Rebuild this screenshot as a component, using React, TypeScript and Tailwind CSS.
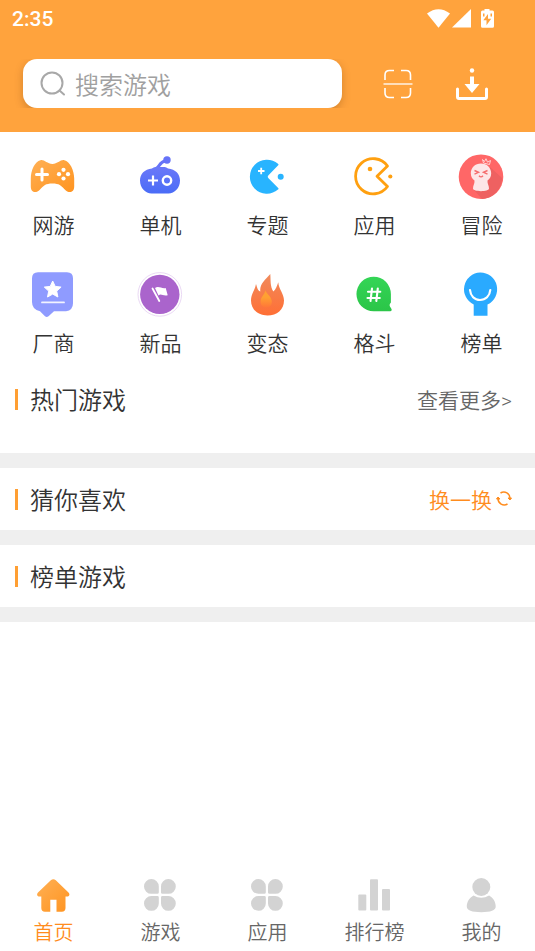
import type { ReactNode } from "react";

interface Item {
  label: string;
  icon: ReactNode;
}

const categories: Item[] = [
  {
    label: "网游",
    icon: (
      <>
        <defs>
          <linearGradient id="pad" x1="0" y1="0" x2="1" y2="1">
            <stop offset="0" stopColor="#ffb055" />
            <stop offset="1" stopColor="#ff9420" />
          </linearGradient>
        </defs>
        <path
          fill="url(#pad)"
          d="M10.5 7.2c3.6-.9 6.6 3.7 11.9 3.7s8.3-4.6 11.9-3.7c5.7 1.2 9.9 10 9.9 18.4v7.9c0 6.4-5.8 6.9-9.2 3.2-4-4.3-5.7-6.3-12.6-6.3s-8.6 2-12.6 6.3c-3.4 3.7-9 3.2-9-3.2v-7.9c0-8.4 4-17.2 9.7-18.4Z"
        />
        <path d="M6.5 21.5h11M12 16v11" stroke="#fff" strokeWidth="3" strokeLinecap="round" />
        <g fill="#fff">
          <circle cx="33.5" cy="16.8" r="2.1" />
          <circle cx="33.5" cy="25.5" r="2.1" />
          <circle cx="29" cy="21.2" r="2.1" />
          <circle cx="38" cy="21.2" r="2.1" />
        </g>
      </>
    ),
  },
  {
    label: "单机",
    icon: (
      <>
        <defs>
          <linearGradient id="bot" x1="0" y1="0" x2="0" y2="1">
            <stop offset="0" stopColor="#6b78f8" />
            <stop offset="1" stopColor="#4a6cf7" />
          </linearGradient>
        </defs>
        <path d="M19 15.5c3.5-1 3-6.5 10-8" stroke="#6673f8" strokeWidth="3" fill="none" />
        <circle cx="30" cy="7" r="3.7" fill="#6673f8" />
        <path
          fill="url(#bot)"
          d="M15 15.5c1.5-1.200 3-1.500 5-1.500h6c2 0 3.500.3 5 1.500 7.500.8 12 5.500 12 12 0 7.500-5.500 13-11.500 13h-17C8.500 40.500 3 35 3 27.500c0-6.500 4.500-11.200 12-12Z"
        />
        <path d="M11 27.5h10M16 22.5v10" stroke="#fff" strokeWidth="2.2" />
        <circle cx="30" cy="27.5" r="4.2" fill="none" stroke="#fff" strokeWidth="2.4" />
      </>
    ),
  },
  {
    label: "专题",
    icon: (
      <>
        <path
          fill="#28b4ff"
          d="M34.2 35c.5.5.4 1-.2 1.500A17 17 0 1 1 34 10.800c.6.5.7 1 .2 1.500L24.500 22.200q-1.500 1.500 0 3Z"
        />
        <path d="M14 18h6.500M17.200 14.800v6.500" stroke="#fff" strokeWidth="1.8" />
        <circle cx="36.7" cy="23.7" r="3" fill="#28b4ff" />
      </>
    ),
  },
  {
    label: "应用",
    icon: (
      <>
        <path
          d="M36.500 13A17.600 17.600 0 1 0 36.500 33.500L26 23.200Z"
          fill="none"
          stroke="#ffa010"
          strokeWidth="2.8"
          strokeLinejoin="round"
        />
        <circle cx="19" cy="16" r="2.3" fill="#ffa010" />
        <circle cx="39.3" cy="23.5" r="2.1" fill="#ffa010" />
      </>
    ),
  },
  {
    label: "冒险",
    icon: (
      <>
        <circle cx="23" cy="23.7" r="22.3" fill="#ff6767" />
        <path d="M32 14 44 25c0 10-8 20.500-20 21L16 37Z" fill="#ee6161" />
        <path
          fill="#fde6e7"
          d="M23 10.500c5.800 0 10.200 4.200 10.200 9.800 0 3.600-1.700 5.700-3.700 7.200-.3 3.500 1.500 4.500 1.500 8 0 3.500-16 3.500-16 0 0-3.500 1.800-4.500 1.500-8-2-1.500-3.700-3.600-3.700-7.200 0-5.600 4.400-9.800 10.200-9.800Z"
        />
        <path
          d="m24.500 6.500 1 3.500 6 1.500 1-4-3 1.700-1.500-3.500-1.500 2.800Z"
          fill="none"
          stroke="#ffd3d3"
          strokeWidth="1"
          strokeLinejoin="round"
        />
        <path
          d="m16.500 17.500 4 1.800-4 1.800M29.500 17.500l-4 1.800 4 1.800M21 22.800q2 2.200 4 0"
          stroke="#f56c6d"
          strokeWidth="1.4"
          fill="none"
        />
      </>
    ),
  },
  {
    label: "厂商",
    icon: (
      <>
        <path
          fill="#8f9bff"
          d="M8 1.300h29q6 0 6 6v25q0 7-7 8H24l-5.500 5q-1.800 1.200-3.500 0l-5-5Q2 38.500 2 31V7.300q0-6 6-6Z"
        />
        <path
          fill="#fff"
          stroke="#fff"
          strokeWidth="1"
          strokeLinejoin="round"
          d="m22.700 10 2.500 5.400 5.900.7-4.400 4 1.200 5.900-5.200-2.900-5.200 2.900 1.200-5.900-4.400-4 5.900-.7Z"
        />
        <path d="M12 31.400h22" stroke="#f2f3ff" strokeWidth="1.8" strokeLinecap="round" />
      </>
    ),
  },
  {
    label: "新品",
    icon: (
      <>
        <circle cx="22.8" cy="23.4" r="21.8" fill="#fff" stroke="#ead9f4" strokeWidth="1" />
        <circle cx="22.8" cy="23.4" r="19.7" fill="#aa64cc" />
        <path d="m15.500 17.500 6.800 12.500" stroke="#fff" strokeWidth="1.8" strokeLinecap="round" />
        <path d="M18 17c3.500-2.800 6.500 1 10.700 0l2 7.200c-4.500 1.500-6.500-2.200-9.200.3Z" fill="#fff" />
      </>
    ),
  },
  {
    label: "变态",
    icon: (
      <>
        <defs>
          <linearGradient id="fire" x1="0" y1="0" x2="0" y2="1">
            <stop offset="0" stopColor="#f08a5c" />
            <stop offset="1" stopColor="#ff6f35" />
          </linearGradient>
          <linearGradient id="ember" x1="0" y1="0" x2="0" y2="1">
            <stop offset="0" stopColor="#ffa032" />
            <stop offset="0.4" stopColor="#ffa032" />
            <stop offset="1" stopColor="#ff7638" />
          </linearGradient>
        </defs>
        <path
          fill="url(#fire)"
          d="M26.300 3c.5 6-.3 12.500 3 17.500 2.700-2 3.500-5.500 5-9.200.3 7 5.700 11.200 5.700 18.200C40 38.500 33 44.500 23.500 44.500S7 38.500 7 29.500C7 23 11 19 12 13c1.300 3.500 1.300 6 4.300 7.500C15.500 13 21 9 26.300 3Z"
        />
        <path fill="url(#ember)" d="M21.500 19.500c1.500 4 6.300 6.500 6.300 11 0 4-2.300 6-5.600 6s-5.600-2-5.600-6c0-4.500 3.700-6.500 4.900-11Z" />
      </>
    ),
  },
  {
    label: "格斗",
    icon: (
      <>
        <defs>
          <linearGradient id="chat" x1="0" y1="0" x2="0" y2="1">
            <stop offset="0" stopColor="#34d556" />
            <stop offset="1" stopColor="#2bc548" />
          </linearGradient>
        </defs>
        <path
          fill="url(#chat)"
          d="M22.700 5.800a17.200 17.200 0 0 1 17.200 17.200v8.500c-2 2-1.500 3.500 0 5.500 1.500 2 .6 3.300-1 3.300H22.700a17.200 17.200 0 0 1 0-34.500Z"
        />
        <path
          d="m21 17.500-1.500 12.500M26.800 17.500l-1.500 12.500M17 20.800h12.300M16.500 27h12.300"
          stroke="#fff"
          strokeWidth="2.1"
          strokeLinecap="round"
        />
      </>
    ),
  },
  {
    label: "榜单",
    icon: (
      <>
        <path fill="#2aaaff" d="M22.200 1.500a16.800 16.800 0 0 1 7.300 32v11.300H15.700V33.500a16.800 16.800 0 0 1 6.500-32Z" />
        <path
          d="M12 19c.5 6 4.500 10 10 10s9.800-4 10.300-10"
          stroke="#fff"
          strokeWidth="2.2"
          strokeLinecap="round"
          fill="none"
        />
      </>
    ),
  },
];

const clover = (
  <>
    <path d="M8.400 1a7.400 7.400 0 0 1 7.400 7.400v6q0 1.400-1.400 1.400h-6a7.400 7.400 0 0 1 0-14.800Z" />
    <path d="M25.400 1a7.400 7.400 0 0 1 0 14.800h-6q-1.400 0-1.400-1.400v-6A7.400 7.400 0 0 1 25.400 1Z" />
    <path d="M8.400 32.800a7.400 7.400 0 0 1 0-14.800h6q1.400 0 1.400 1.400v6a7.400 7.400 0 0 1-7.400 7.400Z" />
    <path d="M25.400 32.800a7.400 7.400 0 0 1-7.400-7.400v-6q0-1.400 1.400-1.400h6a7.400 7.400 0 0 1 0 14.800Z" />
  </>
);

const tabs: Item[] = [
  {
    label: "首页",
    icon: (
      <>
        <defs>
          <linearGradient id="home" x1="0" y1="0" x2="1" y2="1">
            <stop offset="0" stopColor="#ffb055" />
            <stop offset="1" stopColor="#ff9420" />
          </linearGradient>
        </defs>
        <path
          fill="url(#home)"
          d="M14.800 2.300q2.500-2 5 0L32.500 14.500c1.800 2 .8 4-1.500 4h-1.500V30q0 3.700-3.700 3.700h-5.300v-12h-6.200v12H9Q5.300 33.700 5.300 30V18.500H3.500c-2.300 0-3.200-2-1.500-4Z"
        />
      </>
    ),
  },
  { label: "游戏", icon: clover },
  { label: "应用", icon: clover },
  {
    label: "排行榜",
    icon: (
      <>
        <rect x="1.300" y="16.500" width="8" height="16" rx="1" />
        <rect x="13" y="1.300" width="8" height="31.200" rx="1" />
        <rect x="25" y="11" width="8" height="21.500" rx="1" />
      </>
    ),
  },
  {
    label: "我的",
    icon: (
      <>
        <path d="M9.500 17.500q7.800 4.400 15.600 0c4 2.200 6.600 6.400 6.600 11 0 4-5 5.700-14.400 5.700s-14.500-1.700-14.500-5.700c0-4.600 2.700-8.800 6.700-11Z" />
        <circle cx="17.300" cy="9" r="9" />
      </>
    ),
  },
];

const StatusBar = () => (
  <div className="flex h-[37px] items-center justify-between pl-3 pr-[41px] text-white">
    <span className="font-['Roboto',sans-serif] text-[21px] font-medium leading-6">2:35</span>
    <svg className="h-5 w-[67px]" viewBox="0 -1 67 20" fill="currentColor" aria-hidden="true">
      <path d="M0 3.500Q11.500-5 23 3.500L11.500 17.800Z" />
      <path d="M44-1v18.500H25Z" />
      <path
        fillRule="evenodd"
        d="M57.500-1h5v1.500h3q1.500 0 1.500 1.500v14.200q0 1.500-1.500 1.500h-10q-1.500 0-1.500-1.500V2q0-1.500 1.500-1.500h2Zm3.500 5-4.700 6.200h3.200v5l4.700-6.500H61ZM56 3.500v3h1.500v-3ZM63.500 3.500v3H65v-3Z"
      />
    </svg>
  </div>
);

const Header = () => (
  <header className="bg-[#ffa33d]">
    <StatusBar />
    <div className="flex items-center pb-6 pl-[23px] pr-[46px] pt-[22px]">
      {/* The clip keeps the shadow on the left and right sides only */}
      <div className="min-w-0 flex-1 [clip-path:inset(0_-12px)]">
        <label className="flex h-[49px] items-center rounded-[14px] bg-white pl-4 shadow-[0_3px_8px_rgba(80,40,0,0.25)]">
          <svg
            className="size-7 shrink-0"
            viewBox="0 0 28 28"
            fill="none"
            stroke="#a8a8a8"
            strokeWidth="2"
            strokeLinecap="round"
            aria-hidden="true"
          >
            <circle cx="13" cy="13" r="10.500" />
            <path d="m20.500 20.500 4.500 4" />
          </svg>
          <input
            type="search"
            aria-label="搜索游戏"
            placeholder="搜索游戏"
            className="ml-2 w-full min-w-0 bg-transparent text-2xl leading-8 outline-none placeholder:text-[#a0a0a0]"
          />
        </label>
      </div>
      <button type="button" aria-label="扫一扫" className="ml-[41px] shrink-0">
        <svg className="size-[30px]" viewBox="0 0 30 30" fill="none" stroke="#fff" strokeWidth="1.6">
          <path d="M2 11V6q0-4.500 4.500-4.500H11M18 1.500h5q4.500 0 4.500 4.500v5M27.500 19v5q0 4.500-4.500 4.500h-5M11 28.500H6.500Q2 28.500 2 24v-5" />
          <path d="M.5 15h29" strokeWidth="1.3" />
        </svg>
      </button>
      <button type="button" aria-label="下载" className="ml-[42px] shrink-0">
        <svg className="size-[34px]" viewBox="0 0 34 34" fill="#fff">
          <path
            d="M2.500 22v8q0 1.500 1.500 1.500h26q1.500 0 1.500-1.500v-8"
            fill="none"
            stroke="#fff"
            strokeWidth="3"
            strokeLinecap="round"
          />
          <path d="M15 9.500h4v7.500h5.500L17 26l-7.500-9H15Z" />
          <circle cx="17" cy="3.500" r="2.200" />
        </svg>
      </button>
    </div>
  </header>
);

const Section = ({ title, action, className = "" }: { title: string; action?: ReactNode; className?: string }) => (
  <section className={`border-b-[15px] border-[#efefef] ${className}`}>
    <div className="flex h-[62px] items-center justify-between pl-[15px] pr-[23px]">
      <div className="flex items-center gap-3">
        <span className="h-[21px] w-[3px] bg-[#ff9f33]" />
        <h2 className="text-2xl font-[350] leading-8 text-[#333]">{title}</h2>
      </div>
      {action}
    </div>
  </section>
);

const App = () => {
  return (
    <div className="flex min-h-screen flex-col bg-white font-['Noto_Sans_CJK_SC',sans-serif] font-[350]">
      <Header />

      <main className="flex-1">
        <div className="grid grid-cols-5 gap-y-8 pb-[11px] pt-[21px]">
          {categories.map((item) => (
            <a key={item.label} href="#" className="flex flex-col items-center gap-[9px]">
              <svg className="size-[47px]" viewBox="0 0 47 47" fill="none" aria-hidden="true">
                {item.icon}
              </svg>
              <span className="text-[21px] leading-[30px] text-[#333]">{item.label}</span>
            </a>
          ))}
        </div>

        <Section
          title="热门游戏"
          className="pb-[23px]"
          action={
            <a href="#" className="pt-0.5 text-[21px] leading-[30px] text-[#666]">
              查看更多<span className="font-['Roboto',sans-serif]">&gt;</span>
            </a>
          }
        />
        <Section
          title="猜你喜欢"
          action={
            <button type="button" className="flex items-center gap-1 text-[21px] leading-[30px] text-[#ff8c1e]">
              换一换
              <svg className="size-4" viewBox="0 0 16 16" fill="none" stroke="currentColor" strokeWidth="1.5" aria-hidden="true">
                <path d="M4.500 2A6.200 6.200 0 0 1 14 7.500M11.500 13A6.200 6.200 0 0 1 2 7.500" />
                <path d="m.5 8 1.500-2 2 2ZM12 7l2 2 1.500-2Z" fill="currentColor" strokeWidth="1" />
              </svg>
            </button>
          }
        />
        <Section title="榜单游戏" />
      </main>

      <nav className="grid grid-cols-5 pb-[7px]">
        {tabs.map((tab, index) => (
          <a key={tab.label} href="#" className="flex flex-col items-center gap-[7px]">
            <svg className="size-[35px]" viewBox="0 0 35 35" fill="#d3d3d3" aria-hidden="true">
              {tab.icon}
            </svg>
            <span className={`text-xl leading-6 ${index === 0 ? "text-[#ff8c1e]" : "text-[#666]"}`}>{tab.label}</span>
          </a>
        ))}
      </nav>
    </div>
  );
};

export default App;
